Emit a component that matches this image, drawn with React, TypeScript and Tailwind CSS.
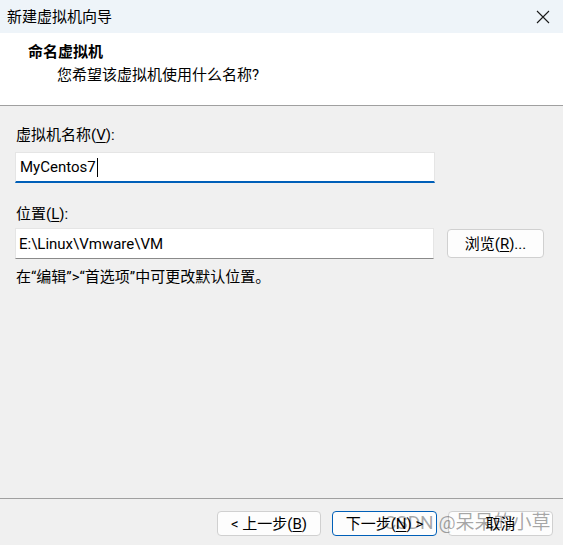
import React from "react";

const FONT = {
  fontFamily: '"Roboto", "Noto Sans CJK SC", sans-serif',
};

function Underlined({ ch }: { ch: string }) {
  return <span className="underline underline-offset-2">{ch}</span>;
}

export default function App() {
  return (
    <div
      className="relative flex h-[545px] w-[563px] flex-col overflow-hidden bg-[#f0f0f0] text-[15px] text-black"
      style={FONT}
    >
      {/* window title bar */}
      <div className="flex h-[33px] shrink-0 items-center justify-between bg-[#eef4f9] pl-[7px] pr-[12px]">
        <span className="text-[15px] leading-[20px]">新建虚拟机向导</span>
        <svg width="14" height="14" viewBox="0 0 14 14" className="mr-[1px]">
          <path d="M1 1 L13 13 M13 1 L1 13" stroke="#1a1a1a" strokeWidth="1.1" />
        </svg>
      </div>

      {/* wizard page header */}
      <div className="h-[73px] shrink-0 border-b border-[#a0a0a0] bg-white pt-[9px]">
        <div className="pl-[28px] text-[15px] font-bold leading-[20px]">命名虚拟机</div>
        <div className="mt-[3px] pl-[57px] leading-[20px]">您希望该虚拟机使用什么名称?</div>
      </div>

      {/* form */}
      <div className="flex flex-1 flex-col px-[15px] pt-[19px]">
        <div className="pl-[1px] leading-[20px]">
          虚拟机名称(<Underlined ch="V" />):
        </div>
        <div className="mt-[7px] flex h-[31px] w-[420px] items-center border border-b-2 border-[#e5e5e5] border-b-[#005fb8] bg-white pl-[4px]">
          <span className="leading-[20px]">MyCentos7</span>
          <span className="ml-[1px] h-[19px] w-px bg-black" />
        </div>

        <div className="mt-[21px] pl-[1px] leading-[20px]">
          位置(<Underlined ch="L" />):
        </div>
        <div className="mt-[4px] flex items-center gap-[13px]">
          <div className="flex h-[31px] w-[419px] items-center border border-[#e5e5e5] border-b-[#8a8a8a] bg-white pl-[3px]">
            <span className="leading-[20px]">E:\Linux\Vmware\VM</span>
          </div>
          <button className="flex h-[29px] w-[97px] items-center justify-center rounded-[4px] border border-[#d0d0d0] bg-[#fdfdfd] leading-[20px]">
            浏览(<Underlined ch="R" />)...
          </button>
        </div>
        <div className="mt-[8px] pl-[1px] leading-[20px]">在“编辑”&gt;“首选项”中可更改默认位置。</div>
      </div>

      {/* navigation buttons */}
      <div className="flex h-[47px] shrink-0 items-start justify-end gap-[11px] border-t border-[#a0a0a0] pr-[10px] pt-[12px]">
        <button className="flex h-[25px] w-[104px] items-center justify-center rounded-[4px] border border-[#d0d0d0] bg-[#fdfdfd] leading-[20px]">
          &lt; 上一步(<Underlined ch="B" />)
        </button>
        <button className="flex h-[25px] w-[105px] items-center justify-center rounded-[4px] border border-[#005fb8] bg-[#fdfdfd] leading-[20px]">
          下一步(<Underlined ch="N" />) &gt;
        </button>
        <button className="flex h-[25px] w-[105px] items-center justify-center rounded-[4px] border border-[#d0d0d0] bg-[#fdfdfd] leading-[20px]">
          取消
        </button>
      </div>

      {/* site watermark */}
      <div className="pointer-events-none absolute left-[384px] top-[509px] whitespace-nowrap text-[19px] leading-[28px] text-black/35">
        CSDN @呆呆的小草
      </div>
    </div>
  );
}
